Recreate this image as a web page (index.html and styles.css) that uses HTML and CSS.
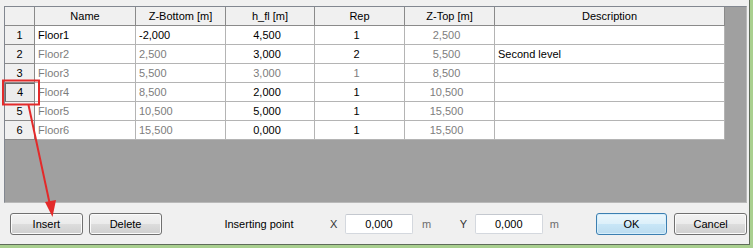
FILE: index.html
```html
<!DOCTYPE html>
<html lang="en">
<head>
    <meta charset="UTF-8">
    <title>Floors</title>
    <link rel="stylesheet" href="styles.css">
</head>
<body>
    <div class="frame">
        <div class="dialog">
            <div class="sheet">
                <div class="row head">
                    <div class="corner"></div>
                    <div class="hcell">Name</div>
                    <div class="hcell">Z-Bottom [m]</div>
                    <div class="hcell">h_fl [m]</div>
                    <div class="hcell">Rep</div>
                    <div class="hcell">Z-Top [m]</div>
                    <div class="hcell">Description</div>
                </div>
                <div class="row">
                    <div class="rh">1</div>
                    <div class="cell">Floor1</div>
                    <div class="cell">-2,000</div>
                    <div class="cell mid">4,500</div>
                    <div class="cell mid">1</div>
                    <div class="cell mid dim">2,500</div>
                    <div class="cell"></div>
                </div>
                <div class="row">
                    <div class="rh">2</div>
                    <div class="cell dim">Floor2</div>
                    <div class="cell dim">2,500</div>
                    <div class="cell mid">3,000</div>
                    <div class="cell mid">2</div>
                    <div class="cell mid dim">5,500</div>
                    <div class="cell">Second level</div>
                </div>
                <div class="row">
                    <div class="rh">3</div>
                    <div class="cell dim">Floor3</div>
                    <div class="cell dim">5,500</div>
                    <div class="cell mid dim">3,000</div>
                    <div class="cell mid dim">1</div>
                    <div class="cell mid dim">8,500</div>
                    <div class="cell"></div>
                </div>
                <div class="row">
                    <div class="rh current">4</div>
                    <div class="cell dim">Floor4</div>
                    <div class="cell dim">8,500</div>
                    <div class="cell mid">2,000</div>
                    <div class="cell mid">1</div>
                    <div class="cell mid dim">10,500</div>
                    <div class="cell"></div>
                </div>
                <div class="row">
                    <div class="rh">5</div>
                    <div class="cell dim">Floor5</div>
                    <div class="cell dim">10,500</div>
                    <div class="cell mid">5,000</div>
                    <div class="cell mid">1</div>
                    <div class="cell mid dim">15,500</div>
                    <div class="cell"></div>
                </div>
                <div class="row">
                    <div class="rh">6</div>
                    <div class="cell dim">Floor6</div>
                    <div class="cell dim">15,500</div>
                    <div class="cell mid">0,000</div>
                    <div class="cell mid">1</div>
                    <div class="cell mid dim">15,500</div>
                    <div class="cell"></div>
                </div>
            </div>

            <div class="bar">
                <button class="btn insert-btn">Insert</button>
                <button class="btn delete-btn">Delete</button>
                <span class="lbl point-lbl">Inserting point</span>
                <span class="lbl axis">X</span>
                <input class="num" type="text" value="0,000">
                <span class="lbl unit unit-x">m</span>
                <span class="lbl axis">Y</span>
                <input class="num" type="text" value="0,000">
                <span class="lbl unit unit-y">m</span>
                <button class="btn ok-btn">OK</button>
                <button class="btn cancel-btn">Cancel</button>
            </div>
        </div>

        <!-- annotation: row 4 -> Insert -->
        <svg class="mark" width="753" height="248" viewBox="0 0 753 248">
            <rect x="3" y="80.5" width="36" height="24" fill="none" stroke="#e32a2a" stroke-width="2"/>
            <line x1="28.5" y1="105" x2="50" y2="205" stroke="#e32a2a" stroke-width="2"/>
            <polygon points="52.5,217 45,202 56,200" fill="#e32a2a"/>
        </svg>
    </div>
</body>
</html>
```

FILE: styles.css
```css
body {
    margin: 0;
    background-color: #f0f0f0;
    font-family: "Liberation Sans", Arial, sans-serif;
    font-size: 11px;
    color: #000;
}
.frame {
    position: relative;
    width: 753px;
    height: 248px;
    box-sizing: border-box;
    border-right: 3px solid #a9cf8f;
    border-bottom: 3px solid #a9cf8f;
}
.dialog {
    height: 100%;
    box-sizing: border-box;
    border-right: 1px solid #5f6b5a;
    border-bottom: 1px solid #5f6b5a;
    padding: 6px 2px 0 4px;
    background-color: #f0f0f0;
}
.sheet {
    height: 197px;
    box-sizing: border-box;
    border: 1px solid #828790;
    border-right-color: #b9b9b9;
    border-bottom-color: #b9b9b9;
    background-color: #a0a0a0;
}
.row {
    display: grid;
    grid-template-columns: 30px 101px 90px 89px 90px 90px 230px;
    height: 19px;
}
.row > div {
    box-sizing: border-box;
    height: 19px;
    line-height: 18px;
    white-space: nowrap;
    overflow: hidden;
}
.corner, .hcell {
    background-color: #f0f0f0;
    border-right: 1px solid #8a8a8a;
    border-bottom: 1px solid #8a8a8a;
    text-align: center;
}
.rh {
    background-color: #f0f0f0;
    border-right: 1px solid #8a8a8a;
    border-bottom: 1px solid #8a8a8a;
    text-align: center;
}
.rh.current {
    border-top: 1px solid #6a6a6a;
    border-left: 1px solid #6a6a6a;
    line-height: 17px;
    background-color: #ececec;
}
.cell {
    background-color: #fff;
    border-right: 1px solid #b4b4b4;
    border-bottom: 1px solid #b4b4b4;
    padding-left: 3px;
}
.cell.mid {
    text-align: center;
    padding-left: 0;
    padding-right: 6px;
}
.dim {
    color: #7d7d7d;
}

.bar {
    display: flex;
    align-items: center;
    height: 21px;
    margin-top: 10px;
    padding-left: 6px;
}
.btn {
    box-sizing: border-box;
    height: 22px;
    padding: 0;
    font-family: inherit;
    font-size: 11px;
    color: #000;
    border: 1px solid #707070;
    border-radius: 3px;
    background: linear-gradient(#f2f2f2 0%, #ebebeb 50%, #dddddd 51%, #cfcfcf 100%);
    box-shadow: inset 0 0 0 1px #fbfbfb;
}
.insert-btn {
    width: 73px;
}
.delete-btn {
    width: 74px;
    margin-left: 6px;
}
.ok-btn {
    width: 72px;
    border-color: #3c7fb1;
    background: linear-gradient(#ecf6fc 0%, #dcf0fa 50%, #c8e6f7 51%, #bcdcef 100%);
    box-shadow: inset 0 0 0 1px #d6eefb;
}
.cancel-btn {
    width: 73px;
    margin-left: 7px;
}
.lbl {
    display: inline-block;
    box-sizing: border-box;
    white-space: nowrap;
}
.point-lbl {
    width: 106px;
    margin-left: 62px;
}
.axis {
    width: 15px;
    color: #333;
}
.unit {
    color: #6d6d6d;
}
.unit-x {
    width: 47px;
    padding-left: 9px;
}
.unit-y {
    width: 53px;
    padding-left: 7px;
}
.num {
    box-sizing: border-box;
    width: 68px;
    height: 20px;
    margin: 0;
    padding: 0;
    border: 1px solid #d4d8de;
    border-top-color: #c4c8cf;
    border-radius: 2px;
    background-color: #fff;
    font-family: inherit;
    font-size: 11px;
    text-align: center;
    color: #000;
}

.mark {
    position: absolute;
    left: 0;
    top: 0;
    pointer-events: none;
}
```
